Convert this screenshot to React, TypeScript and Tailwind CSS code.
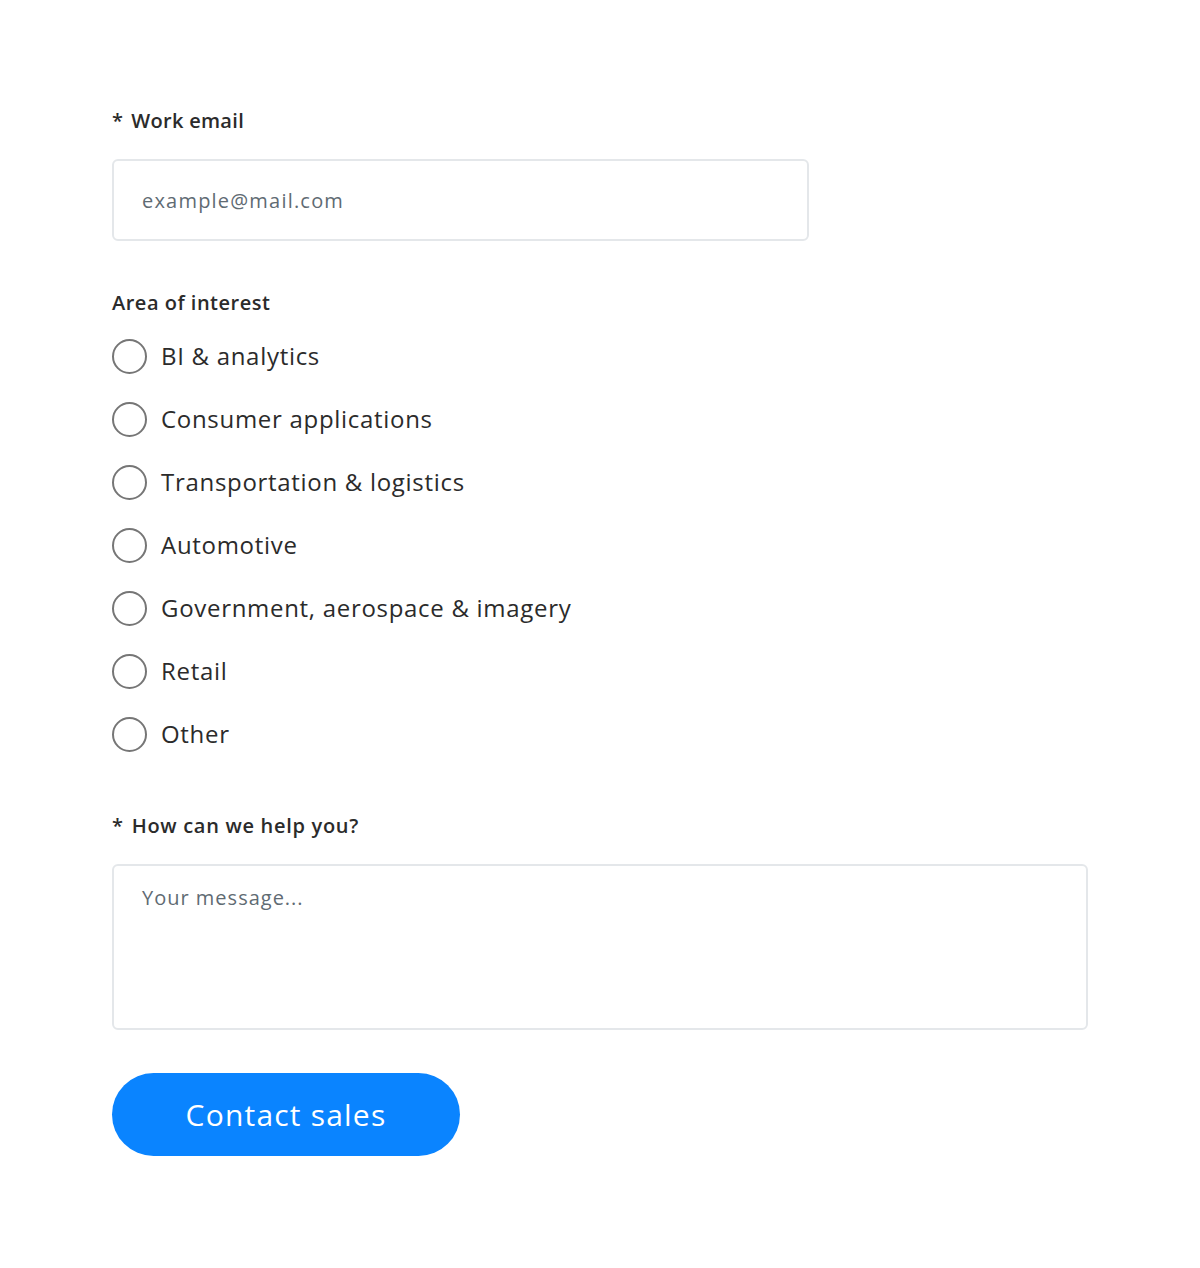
import { useState } from "react";

const AREAS = [
  "BI & analytics",
  "Consumer applications",
  "Transportation & logistics",
  "Automotive",
  "Government, aerospace & imagery",
  "Retail",
  "Other",
];

export default function App() {
  const [area, setArea] = useState<string | null>(null);

  return (
    <div
      className="min-h-[1268px] bg-white text-[#2b2b2b]"
      style={{ fontFamily: '"Open Sans", "Noto Sans", sans-serif' }}
    >
      <form className="pl-[112px] pt-[107px] w-[1088px]">
        <label className="block text-[20px] leading-[28px] font-semibold tracking-[0.3px]">
          <span className="mr-[8px]">*</span>Work email
        </label>
        <input
          type="email"
          placeholder="example@mail.com"
          className="mt-[24px] block w-[697px] h-[82px] rounded-[6px] border-2 border-[#e4e7ea] px-[28px] text-[20px] tracking-[1.2px] text-[#2b2b2b] placeholder:text-[#5f6b73] outline-none"
        />

        <div className="mt-[48px] text-[20px] leading-[28px] font-semibold tracking-[0.5px]">
          Area of interest
        </div>
        <div className="mt-[8px]">
          {AREAS.map((a) => (
            <label
              key={a}
              className="flex items-center h-[63px] cursor-pointer"
              onClick={() => setArea(a)}
            >
              <span className="w-[35px] h-[35px] rounded-full border-2 border-[#767676] flex items-center justify-center">
                {area === a && (
                  <span className="w-[17px] h-[17px] rounded-full bg-[#0a84ff]" />
                )}
              </span>
              <span className="ml-[14px] text-[24px] leading-[32px] tracking-[0.7px] -mt-[2px]">
                {a}
              </span>
            </label>
          ))}
        </div>

        <label className="block mt-[46px] text-[20px] leading-[28px] font-semibold tracking-[0.7px]">
          <span className="mr-[8px]">*</span>How can we help you?
        </label>
        <textarea
          placeholder="Your message..."
          className="mt-[24px] block w-[976px] h-[166px] rounded-[6px] border-2 border-[#e4e7ea] px-[28px] pt-[18px] text-[20px] leading-[28px] tracking-[1px] resize-none placeholder:text-[#5f6b73] outline-none"
        />

        <button
          type="button"
          className="mt-[43px] w-[348px] h-[83px] rounded-full bg-[#0a84ff] text-white text-[30px] font-medium tracking-[1.2px]"
        >
          Contact sales
        </button>
      </form>
    </div>
  );
}
